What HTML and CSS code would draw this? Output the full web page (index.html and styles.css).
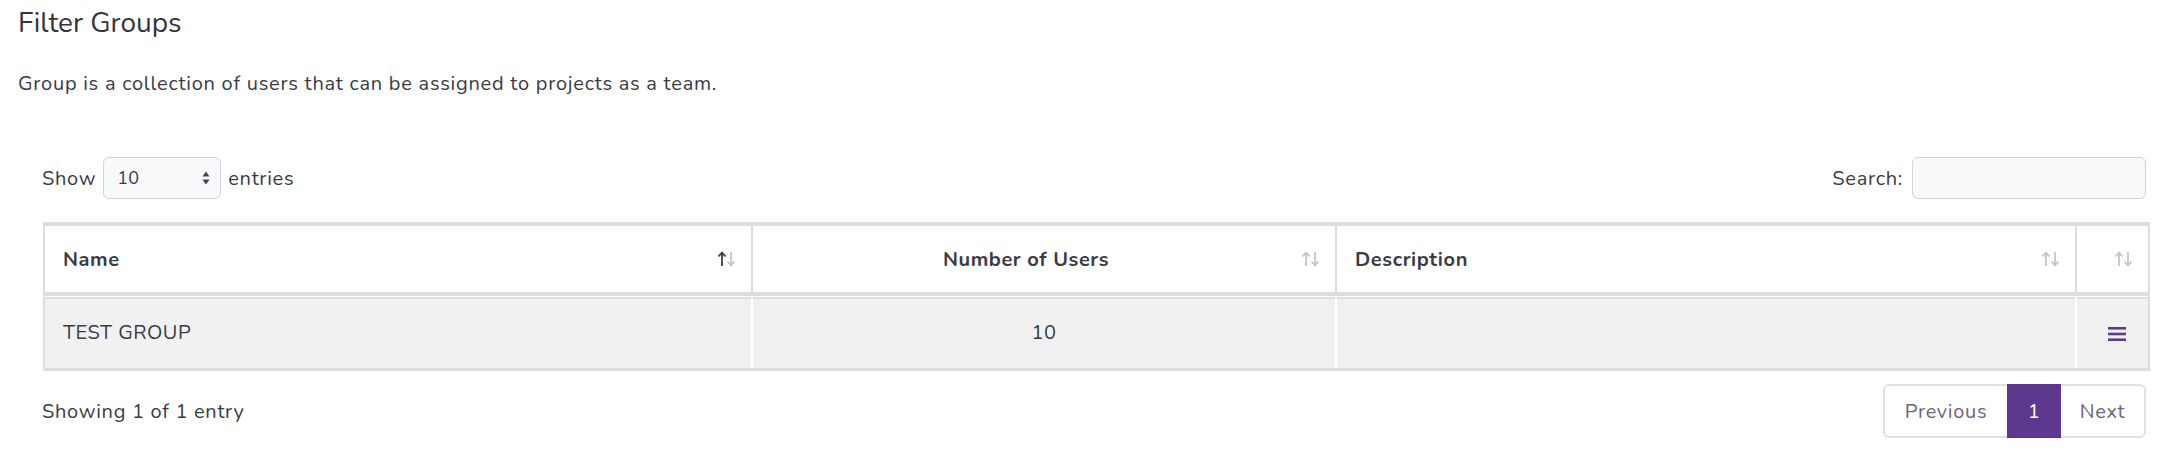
FILE: index.html
```html
<!DOCTYPE html>
<html>
<head>
<meta charset="utf-8">
<link rel="stylesheet" href="styles.css">
</head>
<body>
<div class="page">
  <h1 class="title">Filter Groups</h1>
  <p class="lead">Group is a collection of users that can be assigned to projects as a team.</p>
  <div class="dt">
    <div class="dt-top">
      <div class="length">
        <span>Show</span>
        <span class="select"><span>10</span>
          <svg class="caret" width="8" height="14" viewBox="0 0 8 14"><path d="M4 0.5 L7.5 5.5 L0.5 5.5 Z M4 13.5 L7.5 8.5 L0.5 8.5 Z" fill="#444450"/></svg>
        </span>
        <span>entries</span>
      </div>
      <div class="search">
        <span>Search:</span>
        <span class="input"></span>
      </div>
    </div>
    <table class="grid">
      <colgroup>
        <col class="c1"><col class="c2"><col class="c3"><col class="c4">
      </colgroup>
      <thead>
        <tr>
          <th><div class="th-in"><span class="lbl">Name</span>
            <svg class="sort" width="20" height="16" viewBox="0 0 20 16"><path d="M5 15 V2 M1.5 5.5 L5 1.5 L8.5 5.5" stroke="#3a3b45" stroke-width="1.8" fill="none"/><path d="M14 1 V14 M10.5 10.5 L14 14.5 L17.5 10.5" stroke="#c6c6c9" stroke-width="1.8" fill="none"/></svg></div></th>
          <th><div class="th-in"><span class="lbl center">Number of Users</span>
            <svg class="sort" width="20" height="16" viewBox="0 0 20 16"><path d="M5 15 V2 M1.5 5.5 L5 1.5 L8.5 5.5" stroke="#c6c6c9" stroke-width="1.8" fill="none"/><path d="M14 1 V14 M10.5 10.5 L14 14.5 L17.5 10.5" stroke="#c6c6c9" stroke-width="1.8" fill="none"/></svg></div></th>
          <th><div class="th-in"><span class="lbl">Description</span>
            <svg class="sort" width="20" height="16" viewBox="0 0 20 16"><path d="M5 15 V2 M1.5 5.5 L5 1.5 L8.5 5.5" stroke="#c6c6c9" stroke-width="1.8" fill="none"/><path d="M14 1 V14 M10.5 10.5 L14 14.5 L17.5 10.5" stroke="#c6c6c9" stroke-width="1.8" fill="none"/></svg></div></th>
          <th><div class="th-in"><span class="lbl"></span>
            <svg class="sort" width="20" height="16" viewBox="0 0 20 16"><path d="M5 15 V2 M1.5 5.5 L5 1.5 L8.5 5.5" stroke="#c6c6c9" stroke-width="1.8" fill="none"/><path d="M14 1 V14 M10.5 10.5 L14 14.5 L17.5 10.5" stroke="#c6c6c9" stroke-width="1.8" fill="none"/></svg></div></th>
        </tr>
      </thead>
      <tbody>
        <tr>
          <td>TEST GROUP</td>
          <td class="num">10</td>
          <td></td>
          <td class="act"><svg width="18" height="14" viewBox="0 0 18 14"><rect x="0" y="0" width="18" height="2.6" fill="#5c3a93"/><rect x="0" y="5.7" width="18" height="2.6" fill="#5c3a93"/><rect x="0" y="11.4" width="18" height="2.6" fill="#5c3a93"/></svg></td>
        </tr>
      </tbody>
    </table>
    <div class="dt-bottom">
      <div class="info">Showing 1 of 1 entry</div>
      <ul class="pager">
        <li class="pg prev">Previous</li>
        <li class="pg active">1</li>
        <li class="pg next">Next</li>
      </ul>
    </div>
  </div>
</div>
</body>
</html>
```

FILE: styles.css
```css
* { box-sizing: border-box; }
html, body { margin: 0; padding: 0; background: #fff; }
body {
  font-family: "Nunito", "Open Sans", "DejaVu Sans", sans-serif;
  font-size: 20px;
  letter-spacing: 0.7px;
  color: #3a3b45;
}
.page { padding: 0 26px 0 18px; }
.title {
  margin: 0;
  padding-top: 6px;
  font-size: 28px;
  font-weight: 400;
  line-height: 34px;
  letter-spacing: 0;
  color: #34343e;
}
.lead {
  margin: 30px 0 0 0;
  line-height: 28px;
  font-size: 20px;
  letter-spacing: 0.75px;
}
.dt { margin: 59px 0 0 25px; }
.dt-top {
  display: flex;
  justify-content: space-between;
  align-items: center;
  height: 42px;
}
.length, .search { display: flex; align-items: center; gap: 9px; }
.length { margin-left: -1px; gap: 7px; }
.select {
  width: 118px;
  height: 42px;
  border: 1.5px solid #d1d3dc;
  border-radius: 6px;
  background: #f8f9fb;
  display: flex;
  align-items: center;
  justify-content: space-between;
  padding: 0 10px 0 13px;
  font-size: 18px;
  letter-spacing: 0.3px;
}
.input {
  width: 234px;
  height: 42px;
  border: 1.5px solid #d1d3dc;
  border-radius: 6px;
  background: #f8f9fb;
}
.grid {
  margin-top: 23px;
  width: 100%;
  border-collapse: separate;
  border-spacing: 0;
  border-top: 4px solid #dcdde3;
  border-left: 2px solid #dcdde3;
  border-right: 2px solid #dcdde3;
  border-bottom: 3px solid #dcdde3;
  table-layout: fixed;
}
.c1 { width: 706px; }
.c2 { width: 584px; }
.c3 { width: 740px; }
.c4 { width: 73px; }
.grid th {
  background: #fff;
  height: 70px;
  padding: 0;
  border-bottom: 4px solid #dcdde3;
  font-weight: 700;
  text-align: left;
  font-size: 20px;
  letter-spacing: 0.6px;
  color: #3a3b45;
}
.grid th + th { border-left: 2px solid #dcdde3; }
.th-in {
  display: flex;
  align-items: center;
  padding: 0 14px 0 18px;
}
.lbl { flex: 1; }
.lbl.center { text-align: center; padding-right: 20px; }
.sort { flex: none; }
.grid td {
  background: #f1f1f2;
  height: 72px;
  padding: 0 18px;
  border-top: 1px solid #fff;
  box-shadow: inset 0 2px 0 #dcdde3;
  font-size: 20px;
  letter-spacing: 0.5px;
}
.grid td + td { border-left: 2px solid #fff; }
.grid td.num { text-align: center; }
.grid td.act { text-align: right; padding-right: 22px; }
.grid td.act svg { display: inline-block; vertical-align: middle; }
.dt-bottom {
  display: flex;
  justify-content: space-between;
  align-items: center;
  margin-top: 13px;
}
.info { margin-left: -1px; }
.pager {
  list-style: none;
  margin: 0;
  padding: 0;
  display: flex;
}
.pg {
  height: 54px;
  display: flex;
  align-items: center;
  justify-content: center;
  border: 2px solid #dfe1e7;
  color: #6b6580;
  background: #fff;
}
.prev { width: 124px; border-radius: 6px 0 0 6px; border-right: none; }
.active { width: 54px; background: #5e378f; border-color: #5e378f; color: #fff; }
.next { width: 85px; border-radius: 0 6px 6px 0; border-left: none; }
```
